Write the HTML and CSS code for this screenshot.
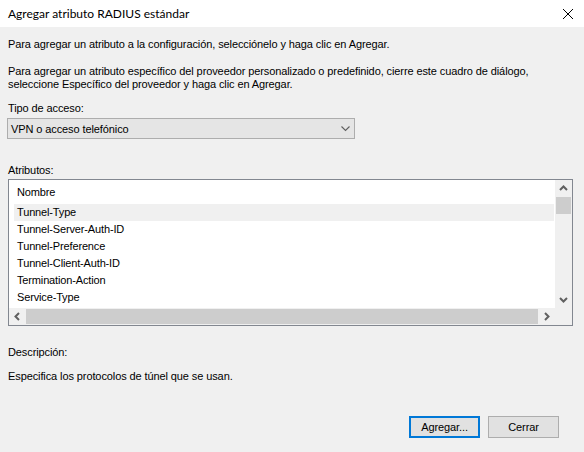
FILE: index.html
```html
<!DOCTYPE html>
<html lang="es">
<head>
<meta charset="utf-8">
<link rel="stylesheet" href="styles.css">
</head>
<body>
<div class="window">
  <div class="titlebar">
    <span class="title">Agregar atributo RADIUS estándar</span>
    <svg class="close" width="12" height="12" viewBox="0 0 12 12"><path d="M1 1 L11 11 M11 1 L1 11" stroke="#000" stroke-width="1"/></svg>
  </div>
  <div class="content">
    <p class="line p1">Para agregar un atributo a la configuración, selecciónelo y haga clic en Agregar.</p>
    <p class="line p2">Para agregar un atributo específico del proveedor personalizado o predefinido, cierre este cuadro de diálogo,<br>seleccione Específico del proveedor y haga clic en Agregar.</p>
    <p class="line lbl-tipo">Tipo de acceso:</p>
    <div class="combo">
      <span>VPN o acceso telefónico</span>
      <svg class="chev" width="9" height="6" viewBox="0 0 9 6"><path d="M0.5 0.5 L4.5 4.5 L8.5 0.5" fill="none" stroke="#606060" stroke-width="1.1"/></svg>
    </div>
    <p class="line lbl-attr">Atributos:</p>
    <div class="listbox">
      <div class="list-main">
        <div class="list-area">
          <div class="list-header">Nombre</div>
          <div class="row selected">Tunnel-Type</div>
          <div class="row">Tunnel-Server-Auth-ID</div>
          <div class="row">Tunnel-Preference</div>
          <div class="row">Tunnel-Client-Auth-ID</div>
          <div class="row">Termination-Action</div>
          <div class="row">Service-Type</div>
        </div>
        <div class="vscroll">
          <svg class="arrow" width="17" height="17" viewBox="0 0 17 17"><path d="M5 10 L8.5 6.5 L12 10" fill="none" stroke="#606060" stroke-width="2"/></svg>
          <div class="vthumb"></div>
          <div class="vtrack"></div>
          <svg class="arrow" width="17" height="17" viewBox="0 0 17 17"><path d="M5 7 L8.5 10.5 L12 7" fill="none" stroke="#606060" stroke-width="2"/></svg>
        </div>
      </div>
      <div class="hscroll">
        <svg class="arrow" width="17" height="17" viewBox="0 0 17 17"><path d="M10 5 L6.5 8.5 L10 12" fill="none" stroke="#606060" stroke-width="2"/></svg>
        <div class="hthumb"></div>
        <svg class="arrow" width="17" height="17" viewBox="0 0 17 17"><path d="M7 5 L10.5 8.5 L7 12" fill="none" stroke="#606060" stroke-width="2"/></svg>
        <div class="corner"></div>
      </div>
    </div>
    <p class="line lbl-desc">Descripción:</p>
    <p class="line desc">Especifica los protocolos de túnel que se usan.</p>
    <div class="buttons">
      <button class="btn primary">Agregar...</button>
      <button class="btn">Cerrar</button>
    </div>
  </div>
</div>
</body>
</html>
```
FILE: styles.css
```css
* { box-sizing: border-box; }
html, body { margin: 0; padding: 0; }
body {
  width: 584px;
  height: 452px;
  background: #f0f0f0;
  font-family: "Liberation Sans", Arial, sans-serif;
  font-size: 11px;
  color: #000;
  overflow: hidden;
}
.window { width: 584px; height: 452px; display: flex; flex-direction: column; }
.titlebar {
  height: 27px;
  background: #fff;
  display: flex;
  align-items: center;
  justify-content: space-between;
  padding: 0 10px 0 8px;
}
.title { font-family: Lato, "Liberation Sans", sans-serif; font-size: 12px; }
.close { display: block; }
.content { padding: 0 8px; flex: 1; display: flex; flex-direction: column; }
.line { margin: 0; line-height: 13px; letter-spacing: -0.1px; }
.p1 { margin-top: 11px; }
.p2 { margin-top: 14px; }
.lbl-tipo { margin-top: 11px; }
.combo {
  margin-top: 3px;
  margin-left: -1px;
  width: 348px;
  height: 21px;
  border: 1px solid #adadad;
  background: #e5e5e5;
  display: flex;
  align-items: center;
  justify-content: space-between;
  padding: 0 4px 0 3px;
  letter-spacing: -0.1px;
}
.chev { display: block; margin-right: 0; }
.lbl-attr { margin-top: 25px; }
.listbox {
  margin-top: 2px;
  width: 565px;
  height: 147px;
  border: 1px solid #828790;
  background: #fff;
  display: flex;
  flex-direction: column;
}
.list-main { flex: 1; display: flex; min-height: 0; }
.list-area { flex: 1; padding: 0 1px 0 5px; letter-spacing: -0.15px; }
.list-header { height: 24px; padding: 6px 0 0 3px; line-height: 13px; }
.row { height: 17px; line-height: 17px; padding-left: 3px; }
.row.selected { background: #f0f0f0; }
.vscroll { width: 17px; background: #f0f0f0; display: flex; flex-direction: column; }
.arrow { display: block; flex: none; }
.vthumb { height: 17px; background: #cdcdcd; margin: 0 1px; }
.vtrack { flex: 1; }
.hscroll { height: 17px; background: #f0f0f0; display: flex; }
.hthumb { flex: 1; background: #cdcdcd; margin: 1px 0; }
.corner { width: 17px; background: #f0f0f0; }
.lbl-desc { margin-top: 20px; }
.desc { margin-top: 11px; }
.buttons { margin-top: auto; margin-bottom: 14px; display: flex; justify-content: flex-end; gap: 8px; padding-right: 17px; }
.btn {
  width: 71px;
  height: 22px;
  font-family: "Liberation Sans", Arial, sans-serif;
  font-size: 11px;
  letter-spacing: -0.1px;
  background: #e1e1e1;
  border: 1px solid #adadad;
  padding: 0;
  color: #000;
}
.btn.primary { border: 2px solid #0078d7; }
```
